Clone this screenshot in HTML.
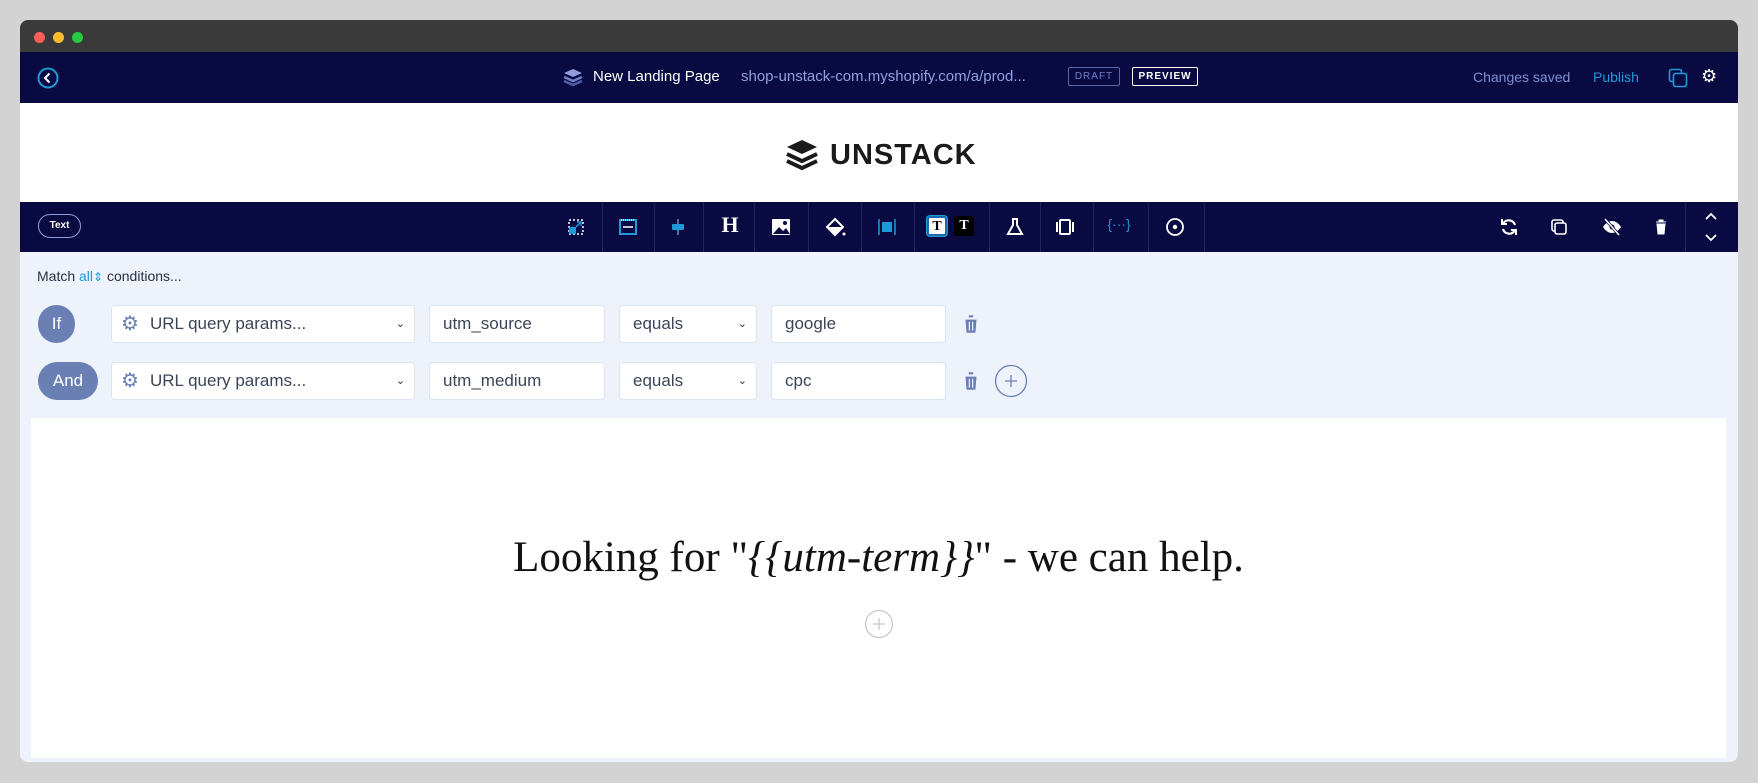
<!DOCTYPE html>
<html><head><meta charset="utf-8"><style>
*{margin:0;padding:0;box-sizing:border-box}
body{width:1758px;height:783px;background:#d3d3d3;position:relative;overflow:hidden;font-family:"Liberation Sans",sans-serif}
.a{position:absolute}
.win{left:20px;top:20px;width:1718px;height:742px;background:#eef2fb;border-radius:8px;overflow:hidden}
.tb{left:0;top:0;width:1718px;height:32px;background:#3a3a3a}
.dot{width:11px;height:11px;border-radius:50%;top:12px}
.hd{left:0;top:32px;width:1718px;height:51px;background:#0a0a42}
.logo{left:0;top:83px;width:1718px;height:99px;background:#fff}
.tool{left:0;top:182px;width:1718px;height:50px;background:#0a0a42}
.div{top:0;width:1px;height:50px;background:#23235e}
.ic{top:13px;width:24px;height:24px;margin-left:-12px}
.inp{height:38px;background:#fff;border:1px solid #dde3f0;border-radius:4px;font-size:17px;color:#3c4457;line-height:36px;padding-left:13px}
.pill{height:38px;border-radius:19px;background:#6a80b4;color:#fff;font-size:17px;line-height:38px;text-align:center}
.chev{position:absolute;right:9px;top:0;font-size:11px;color:#333}
</style></head><body>
<div class="a win">
 <div class="a tb">
  <div class="a dot" style="left:14px;background:#fe5f57"></div>
  <div class="a dot" style="left:33px;background:#febc2e"></div>
  <div class="a dot" style="left:52px;background:#28c840"></div>
 </div>
 <div class="a hd">
  <svg class="a" style="left:17px;top:15px" width="22" height="22" viewBox="0 0 22 22"><circle cx="11" cy="11" r="9.5" fill="none" stroke="#1e9ad6" stroke-width="2"/><path d="M12.5 6.5 8 11l4.5 4.5" fill="none" stroke="#fff" stroke-width="2"/></svg>
  <svg class="a" style="left:543px;top:15px" width="20" height="20" viewBox="0 0 20 20"><path d="M10 2 19 6 10 10 1 6z" fill="#8f9fe0"/><path d="M1 10l9 4 9-4" fill="none" stroke="#6f7fc8" stroke-width="2.5"/><path d="M1 14l9 4 9-4" fill="none" stroke="#5060a8" stroke-width="2.5"/></svg>
  <div class="a" style="left:573px;top:16px;color:#fff;font-size:15px">New Landing Page</div>
  <div class="a" style="left:721px;top:16px;color:#8fa0e0;font-size:15px">shop-unstack-com.myshopify.com/a/prod...</div>
  <div class="a" style="left:1048px;top:15px;width:52px;height:19px;border:1px solid #5866a8;border-radius:2px;color:#6f7fc8;font-size:10px;letter-spacing:1px;text-align:center;line-height:17px">DRAFT</div>
  <div class="a" style="left:1112px;top:15px;width:66px;height:19px;border:1px solid #fff;border-radius:2px;color:#fff;font-size:10px;font-weight:bold;letter-spacing:1px;text-align:center;line-height:17px">PREVIEW</div>
  <div class="a" style="left:1453px;top:17px;color:#7f8fd0;font-size:14px">Changes saved</div>
  <div class="a" style="left:1573px;top:17px;color:#1e9ad6;font-size:14px">Publish</div>
  <svg class="a" style="left:1648px;top:16px" width="20" height="20" viewBox="0 0 20 20"><rect x="1.5" y="1.5" width="12" height="12" rx="2" fill="none" stroke="#1e9ad6" stroke-width="1.6"/><rect x="5.5" y="5.5" width="13" height="13" rx="2" fill="#0a0a42" stroke="#1e9ad6" stroke-width="1.6"/></svg>
  <div class="a" style="left:1681px;top:14px;color:#fff;font-size:18px">⚙</div>
 </div>
 <div class="a logo">
  <svg class="a" style="left:765px;top:36px" width="34" height="32" viewBox="0 0 34 32"><path d="M17 1 32 8 17 15 2 8z" fill="#1a1a1a"/><path d="M2 15l15 7 15-7" fill="none" stroke="#1a1a1a" stroke-width="4"/><path d="M2 22l15 7 15-7" fill="none" stroke="#1a1a1a" stroke-width="4"/></svg>
  <div class="a" style="left:810px;top:36px;font-size:29px;font-weight:bold;color:#1a1a1a;letter-spacing:1px;line-height:32px">UNSTACK</div>
 </div>
 <div class="a tool">
  <div class="a" style="left:18px;top:12px;width:43px;height:24px;border:1.5px solid #8f9fe0;border-radius:12px;color:#fff;font-size:10px;font-weight:bold;text-align:center;line-height:21px">Text</div>
  <div class="a div" style="left:582px"></div><div class="a div" style="left:634px"></div><div class="a div" style="left:683px"></div><div class="a div" style="left:734px"></div><div class="a div" style="left:788px"></div><div class="a div" style="left:841px"></div><div class="a div" style="left:894px"></div><div class="a div" style="left:969px"></div><div class="a div" style="left:1020px"></div><div class="a div" style="left:1073px"></div><div class="a div" style="left:1128px"></div><div class="a div" style="left:1184px"></div><div class="a div" style="left:1665px"></div>
  <svg class="a ic" style="left:556px" viewBox="0 0 24 24"><rect x="5" y="5" width="14" height="14" fill="none" stroke="#fff" stroke-width="1.5" stroke-dasharray="2 2"/><rect x="5" y="12" width="7" height="7" fill="#1e9ad6"/><path d="M12 12l5-5M13 7h4v4" stroke="#1e9ad6" stroke-width="1.5" fill="none"/></svg>
  <svg class="a ic" style="left:608px" viewBox="0 0 24 24"><rect x="4" y="5" width="16" height="14" fill="none" stroke="#1e9ad6" stroke-width="2"/><path d="M7 12h10" stroke="#fff" stroke-width="1.5"/><path d="M5 5h14" stroke="#fff" stroke-width="1.5" stroke-dasharray="1 1"/></svg>
  <svg class="a ic" style="left:658px" viewBox="0 0 24 24"><path d="M12 4v16" stroke="#4a6fa8" stroke-width="2"/><rect x="6" y="9" width="12" height="6" rx="1" fill="#1e9ad6"/></svg>
  <div class="a" style="left:698px;top:10px;width:24px;color:#fff;font:bold 22px 'Liberation Serif',serif;text-align:center">H</div>
  <svg class="a ic" style="left:761px" viewBox="0 0 24 24"><rect x="3" y="4" width="18" height="16" rx="1" fill="#fff"/><path d="M4 19l6-7 4 4 3-3 4 6z" fill="#0a0a42"/><circle cx="16" cy="8" r="2" fill="#0a0a42"/></svg>
  <svg class="a ic" style="left:815px" viewBox="0 0 24 24"><path d="M12 4 20 12 12 20 4 12z" fill="none" stroke="#fff" stroke-width="2"/><path d="M5 12h14l-7 7z" fill="#fff"/><circle cx="21" cy="19" r="1.5" fill="#fff"/></svg>
  <svg class="a ic" style="left:867px" viewBox="0 0 24 24"><path d="M4 4v16M20 4v16" stroke="#1e9ad6" stroke-width="1.5"/><rect x="7" y="7" width="10" height="10" fill="#1e9ad6"/></svg>
  <div class="a" style="left:907px;top:14px;width:20px;height:20px;background:#fff;border:2px solid #1e6ab0;border-radius:3px;box-shadow:0 0 0 1px #1e9ad6;font:bold 14px 'Liberation Serif',serif;text-align:center;line-height:17px">T</div>
  <div class="a" style="left:934px;top:14px;width:20px;height:20px;background:#000;border-radius:3px;color:#fff;font:bold 14px 'Liberation Serif',serif;text-align:center;line-height:20px">T</div>
  <svg class="a ic" style="left:995px" viewBox="0 0 24 24"><path d="M9 4h6M10 4v6l-5 9h14l-5-9V4" fill="none" stroke="#fff" stroke-width="2"/></svg>
  <svg class="a ic" style="left:1045px" viewBox="0 0 24 24"><rect x="7" y="5" width="10" height="14" rx="1" fill="none" stroke="#fff" stroke-width="2"/><path d="M4 7v10M20 7v10" stroke="#fff" stroke-width="2"/></svg>
  <div class="a" style="left:1087px;top:14px;width:24px;color:#1e9ad6;font-size:14px;text-align:center">{···}</div>
  <svg class="a ic" style="left:1155px" viewBox="0 0 24 24"><circle cx="12" cy="12" r="8" fill="none" stroke="#fff" stroke-width="1.8"/><circle cx="12" cy="12" r="2.2" fill="#fff"/></svg>
  <svg class="a ic" style="left:1489px" viewBox="0 0 24 24"><path d="M18 10a6.5 6.5 0 0 0-11.5-2M6 14a6.5 6.5 0 0 0 11.5 2" fill="none" stroke="#fff" stroke-width="2.2"/><path d="M5 4v5h5M19 20v-5h-5" fill="none" stroke="#fff" stroke-width="2"/></svg>
  <svg class="a ic" style="left:1539px" viewBox="0 0 24 24"><rect x="5" y="5" width="11" height="11" rx="2" fill="none" stroke="#fff" stroke-width="1.6"/><rect x="8" y="8" width="11" height="11" rx="2" fill="#0a0a42" stroke="#fff" stroke-width="1.6"/></svg>
  <svg class="a ic" style="left:1592px" viewBox="0 0 24 24"><path d="M3 12s3.5-6 9-6 9 6 9 6-3.5 6-9 6-9-6-9-6z" fill="#fff"/><circle cx="12" cy="12" r="2.5" fill="#0a0a42"/><path d="M5 4l14 16" stroke="#0a0a42" stroke-width="3"/><path d="M5 4l14 16" stroke="#fff" stroke-width="1.5"/></svg>
  <svg class="a ic" style="left:1641px" viewBox="0 0 24 24"><path d="M7 7h10M10 7V5h4v2M8 9h8l-1 10H9z" fill="#fff" stroke="#fff" stroke-width="1"/></svg>
  <svg class="a" style="left:1683px;top:8px" width="16" height="34" viewBox="0 0 16 34"><path d="M3 9l5-5 5 5M3 25l5 5 5-5" fill="none" stroke="#fff" stroke-width="1.8"/></svg>
 </div>
 <div class="a" style="left:17px;top:248px;font-size:14px;color:#2a2f44">Match <span style="color:#1e9ad6">all</span><span style="color:#1e9ad6;font-size:12px">⇕</span> conditions...</div>
 <div class="a pill" style="left:18px;top:285px;width:37px">If</div>
 <div class="a pill" style="left:18px;top:342px;width:60px">And</div>
 <div class="a inp" style="left:91px;top:285px;width:304px;padding-left:38px"><span class="a" style="left:9px;top:0;color:#6a80b4;font-size:20px">⚙</span>URL query params...<span class="chev">⌄</span></div>
 <div class="a inp" style="left:409px;top:285px;width:176px">utm_source</div>
 <div class="a inp" style="left:599px;top:285px;width:138px">equals<span class="chev">⌄</span></div>
 <div class="a inp" style="left:751px;top:285px;width:175px">google</div>
 <div class="a inp" style="left:91px;top:342px;width:304px;padding-left:38px"><span class="a" style="left:9px;top:0;color:#6a80b4;font-size:20px">⚙</span>URL query params...<span class="chev">⌄</span></div>
 <div class="a inp" style="left:409px;top:342px;width:176px">utm_medium</div>
 <div class="a inp" style="left:599px;top:342px;width:138px">equals<span class="chev">⌄</span></div>
 <div class="a inp" style="left:751px;top:342px;width:175px">cpc</div>
 <svg class="a" style="left:940px;top:293px" width="22" height="22" viewBox="0 0 20 20"><path d="M3 4h14M8 4V2h4v2M5 6h10l-1 12H6z" fill="#6a80b4"/><path d="M8.5 8v8M11.5 8v8" stroke="#fff" stroke-width="1"/></svg>
 <svg class="a" style="left:940px;top:350px" width="22" height="22" viewBox="0 0 20 20"><path d="M3 4h14M8 4V2h4v2M5 6h10l-1 12H6z" fill="#6a80b4"/><path d="M8.5 8v8M11.5 8v8" stroke="#fff" stroke-width="1"/></svg>
 <svg class="a" style="left:974px;top:344px" width="34" height="34" viewBox="0 0 34 34"><circle cx="17" cy="17" r="15.5" fill="none" stroke="#6a80b4" stroke-width="1.3"/><path d="M17 11v12M11 17h12" stroke="#6a80b4" stroke-width="1.3"/></svg>
 <div class="a" style="left:11px;top:398px;width:1695px;height:340px;background:#fff">
  <div class="a" style="left:0;top:115px;width:1695px;text-align:center;font:43px 'Liberation Serif',serif;color:#111">Looking for "<i>{{utm-term}}</i>" - we can help.</div>
  <svg class="a" style="left:833px;top:191px" width="30" height="30" viewBox="0 0 30 30"><circle cx="15" cy="15" r="13.5" fill="none" stroke="#c5c8d6" stroke-width="1.3"/><path d="M15 9v12M9 15h12" stroke="#c5c8d6" stroke-width="1.3"/></svg>
 </div>
</div>
</body></html>
